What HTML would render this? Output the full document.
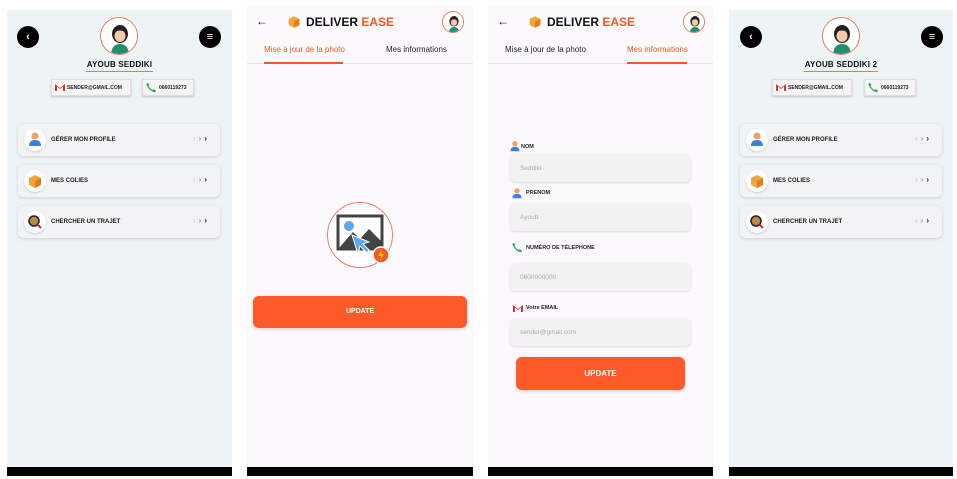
<!DOCTYPE html>
<html><head><meta charset="utf-8"><style>
*{margin:0;padding:0;box-sizing:border-box}
body{width:957px;height:479px;background:#fff;position:relative;overflow:hidden;font-family:"Liberation Sans",sans-serif}
.a{position:absolute}
.p1{background:#eef3f6}
.p2{background:#fcf9fd}
.bar{position:absolute;height:9px;background:#000}
.circ{position:absolute;border-radius:50%}
.btnb{background:#000;width:22px;height:22px;border-radius:50%;color:#fff;font-size:11px;font-weight:bold;text-align:center;line-height:22px}
.av{width:38px;height:38px;border:1px solid #e8775a;border-radius:50%;background:#fff;overflow:hidden}
.name{font-size:8px;font-weight:bold;color:#111;text-align:center;letter-spacing:.2px}
.chip{background:#f4f4f4;border:1px solid #ddd;box-shadow:0 1px 2px rgba(0,0,0,.2);font-size:5px;font-weight:bold;color:#222;display:flex;align-items:center;padding-left:3px;gap:2px}
.card{background:#f2f3f4;border-radius:5px;box-shadow:0 1px 3px rgba(0,0,0,.15);height:32px;width:202px}
.card .ic{position:absolute;left:6px;top:5px;width:22px;height:22px;border-radius:50%;background:#fff;box-shadow:0 1px 2px rgba(0,0,0,.15)}
.card .t{position:absolute;left:33px;top:13px;font-size:6px;font-weight:bold;color:#222}
.card .ch{position:absolute;right:10px;top:10px;font-size:8px;font-weight:bold;color:#222;letter-spacing:3px}
.card .ch span{color:#ccc}.card .ch i{font-style:normal;color:#999}
.logo{font-size:12px;font-weight:bold;color:#111}
.logo b{color:#f15a24}
.tab{font-size:8px;color:#222}
.inp{background:#f2f2f2;border-radius:5px;box-shadow:0 1px 2px rgba(0,0,0,.12);width:181px;height:28px;font-size:6.5px;color:#aaa;padding:11px 0 0 10px}
.lbl{font-size:5.5px;font-weight:bold;color:#222}
.ub{background:#fc5a28;border-radius:6px;color:#fff;font-weight:bold;text-align:center;box-shadow:0 1px 3px rgba(0,0,0,.2)}
</style></head><body>

<svg width="0" height="0" style="position:absolute"><defs>
<g id="girl"><rect x="0" y="0" width="38" height="38" fill="#fff"/><path d="M10 38 Q10 26 19 26 Q28 26 28 38Z" fill="#1f8f6e"/><ellipse cx="19" cy="16" rx="8" ry="9" fill="#222"/><ellipse cx="19" cy="18" rx="5.5" ry="6" fill="#f4c9a8"/><path d="M13 14 Q19 7 25 14 Q19 11 13 14Z" fill="#222"/></g>
<g id="pers"><circle cx="11" cy="7" r="3.5" fill="#f0a060"/><path d="M5 17 Q5 11 11 11 Q17 11 17 17Z" fill="#3b82e0"/></g>
<g id="box"><path d="M5 8 L11 5 L17 8 L17 15 L11 18 L5 15Z" fill="#f0a63a"/><path d="M11 11 L17 8 L17 15 L11 18Z" fill="#e07f1a"/></g>
<g id="mag"><circle cx="10" cy="10" r="5" fill="#b98a4a" stroke="#222" stroke-width="1.5"/><path d="M13.5 13.5 L17 17" stroke="#d23" stroke-width="2"/></g>
<g id="gm"><path d="M0 1 L0 8 L2 8 L2 3.5 L5 6 L8 3.5 L8 8 L10 8 L10 1 L5 5Z" fill="#d33"/></g>
<g id="ph"><path d="M1 1 Q0 2 1 4 Q4 9 8 10 Q9.5 10.5 10 9 L8 7 L6.5 8 Q3.5 6.5 2.5 3.5 L3.5 2 Z" fill="#2aa855"/></g>
</defs></svg>

<!-- PANEL 1 -->
<div class="a p1" style="left:7px;top:10px;width:225px;height:466px"></div>
<div class="bar" style="left:7px;top:467px;width:225px"></div>
<div class="a btnb" style="left:17px;top:26px">‹</div>
<div class="a btnb" style="left:199px;top:26px">≡</div>
<div class="a av" style="left:100px;top:17px"><svg width="38" height="38"><use href="#girl"/></svg></div>
<div class="a name" style="left:7px;top:60px;width:225px">AYOUB SEDDIKI</div>
<div class="a" style="left:86px;top:71px;width:67px;height:1px;background:#e8775a"></div>
<div class="a chip" style="left:51px;top:79px;width:80px;height:17px"><svg width="10" height="9"><use href="#gm"/></svg>SENDER@GMAIL.COM</div>
<div class="a chip" style="left:142px;top:79px;width:52px;height:17px"><svg width="11" height="11"><use href="#ph"/></svg>0660119273</div>
<div class="a card" style="left:18px;top:124px"><div class="ic"><svg width="22" height="22"><use href="#pers"/></svg></div><div class="t">GÉRER MON PROFILE</div><div class="ch"><span>›</span><i>›</i>›</div></div>
<div class="a card" style="left:18px;top:165px"><div class="ic"><svg width="22" height="22"><use href="#box"/></svg></div><div class="t">MES COLIES</div><div class="ch"><span>›</span><i>›</i>›</div></div>
<div class="a card" style="left:18px;top:206px"><div class="ic"><svg width="22" height="22"><use href="#mag"/></svg></div><div class="t">CHERCHER UN TRAJET</div><div class="ch"><span>›</span><i>›</i>›</div></div>

<!-- PANEL 2 -->
<div class="a p2" style="left:247px;top:5px;width:226px;height:471px"></div>
<div class="bar" style="left:247px;top:467px;width:226px"></div>
<div class="a" style="left:256px;top:14px;font-size:12px;color:#222">←</div>
<div class="a" style="left:286px;top:13px"><svg width="16" height="18" viewBox="2 3 18 17"><use href="#box"/></svg></div>
<div class="a logo" style="left:306px;top:15px">DELIVER <b>EASE</b></div>
<div class="a av" style="left:442px;top:11px;width:22px;height:22px"><svg width="22" height="22" viewBox="0 0 38 38"><use href="#girl"/></svg></div>
<div class="a tab" style="left:264px;top:45px;color:#f15a24">Mise à jour de la photo</div>
<div class="a tab" style="left:386px;top:45px">Mes informations</div>
<div class="a" style="left:247px;top:63px;width:226px;height:1px;background:#e6e2e6"></div>
<div class="a" style="left:264px;top:62px;width:79px;height:2px;background:#f15a24"></div>
<div class="circ" style="left:327px;top:202px;width:66px;height:66px;border:1px solid #ef7a5e;background:#fff"></div>
<svg class="a" style="left:336px;top:214px" width="58" height="52"><rect x="2" y="2" width="44" height="33" fill="#fff" stroke="#444" stroke-width="3"/><circle cx="13" cy="12" r="5" fill="#5aa9ef"/><path d="M3 34 L17 18 L24 25 L33 15 L45 27 L45 34Z" fill="#444"/><path d="M16 21 L22 40 L24 32 L31 39 L33 36 L27 30 L33 28Z" fill="#5aa9ef" stroke="#fff" stroke-width="1"/><circle cx="45" cy="41" r="8" fill="#f15a24" stroke="#fff" stroke-width="1.5"/><path d="M46 35 L42 42 L45 42 L44 47 L48 40 L45 40Z" fill="#ffc107"/></svg>
<div class="a ub" style="left:253px;top:296px;width:214px;height:32px;font-size:7px;line-height:32px">UPDATE</div>

<!-- PANEL 3 -->
<div class="a p2" style="left:488px;top:5px;width:225px;height:471px"></div>
<div class="bar" style="left:488px;top:467px;width:225px"></div>
<div class="a" style="left:497px;top:14px;font-size:12px;color:#222">←</div>
<div class="a" style="left:527px;top:13px"><svg width="16" height="18" viewBox="2 3 18 17"><use href="#box"/></svg></div>
<div class="a logo" style="left:547px;top:15px">DELIVER <b>EASE</b></div>
<div class="a av" style="left:683px;top:11px;width:22px;height:22px"><svg width="22" height="22" viewBox="0 0 38 38"><use href="#girl"/></svg></div>
<div class="a tab" style="left:505px;top:45px">Mise à jour de la photo</div>
<div class="a tab" style="left:627px;top:45px;color:#f15a24">Mes informations</div>
<div class="a" style="left:488px;top:63px;width:225px;height:1px;background:#e6e2e6"></div>
<div class="a" style="left:627px;top:62px;width:60px;height:2px;background:#f15a24"></div>
<svg class="a" style="left:509px;top:140px" width="12" height="12" viewBox="4 2 14 16"><use href="#pers"/></svg><div class="a lbl" style="left:521px;top:144px">NOM</div>
<div class="a inp" style="left:510px;top:154px">Seddiki</div>
<svg class="a" style="left:511px;top:187px" width="12" height="12" viewBox="4 2 14 16"><use href="#pers"/></svg><div class="a lbl" style="left:526px;top:190px">PRENOM</div>
<div class="a inp" style="left:510px;top:203px">Ayoub</div>
<svg class="a" style="left:512px;top:242px" width="11" height="11"><use href="#ph"/></svg><div class="a lbl" style="left:526px;top:245px">NUMÉRO DE TÉLEPHONE</div>
<div class="a inp" style="left:510px;top:263px">0600000000</div>
<svg class="a" style="left:513px;top:304px" width="10" height="9"><use href="#gm"/></svg><div class="a lbl" style="left:526px;top:305px">Votre EMAIL</div>
<div class="a inp" style="left:510px;top:318px">sender@gmail.com</div>
<div class="a ub" style="left:516px;top:357px;width:169px;height:33px;font-size:8px;line-height:33px">UPDATE</div>

<!-- PANEL 4 -->
<div class="a p1" style="left:729px;top:10px;width:224px;height:466px"></div>
<div class="bar" style="left:729px;top:467px;width:224px"></div>
<div class="a btnb" style="left:740px;top:26px">‹</div>
<div class="a btnb" style="left:921px;top:26px">≡</div>
<div class="a av" style="left:822px;top:17px"><svg width="38" height="38"><use href="#girl"/></svg></div>
<div class="a name" style="left:729px;top:60px;width:224px">AYOUB SEDDIKI 2</div>
<div class="a" style="left:804px;top:71px;width:74px;height:1px;background:#e8775a"></div>
<div class="a chip" style="left:772px;top:79px;width:80px;height:17px"><svg width="10" height="9"><use href="#gm"/></svg>SENDER@GMAIL.COM</div>
<div class="a chip" style="left:864px;top:79px;width:52px;height:17px"><svg width="11" height="11"><use href="#ph"/></svg>0660119273</div>
<div class="a card" style="left:740px;top:124px"><div class="ic"><svg width="22" height="22"><use href="#pers"/></svg></div><div class="t">GÉRER MON PROFILE</div><div class="ch"><span>›</span><i>›</i>›</div></div>
<div class="a card" style="left:740px;top:165px"><div class="ic"><svg width="22" height="22"><use href="#box"/></svg></div><div class="t">MES COLIES</div><div class="ch"><span>›</span><i>›</i>›</div></div>
<div class="a card" style="left:740px;top:206px"><div class="ic"><svg width="22" height="22"><use href="#mag"/></svg></div><div class="t">CHERCHER UN TRAJET</div><div class="ch"><span>›</span><i>›</i>›</div></div>
</body></html>
